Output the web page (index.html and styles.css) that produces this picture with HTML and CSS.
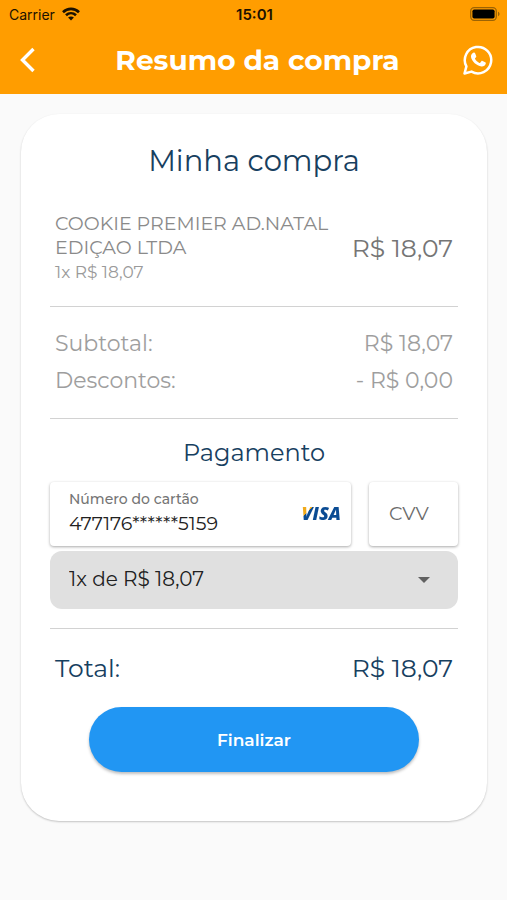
FILE: index.html
```html
<!DOCTYPE html>
<html lang="pt-BR">
<head>
    <meta charset="UTF-8">
    <meta name="viewport" content="width=device-width, initial-scale=1.0">
    <title>Resumo da compra</title>
    <link rel="stylesheet" href="styles.css">
</head>
<body>
    <header class="header">
        <div class="status-bar">
            <div class="carrier">
                <span>Carrier</span>
                <svg width="18" height="14" viewBox="0 0 18 14" fill="none" stroke="#1c1200" stroke-width="2.6">
                    <path d="M1 5.2C5.500 .8 12.500 .8 17 5.200"/>
                    <path d="M4 8.300C6.900 5.500 11.100 5.500 14 8.300"/>
                    <path d="M9 13.500L6.100 10.600C7.700 9.100 10.300 9.100 11.900 10.600Z" fill="#1c1200" stroke="none"/>
                </svg>
            </div>
            <span class="time">15:01</span>
            <svg class="battery" width="30" height="14" viewBox="0 0 30 14">
                <rect x=".7" y=".7" width="25.600" height="12.600" rx="3.500" fill="none" stroke="#9c6304" stroke-width="1.300"/>
                <rect x="2.400" y="2.400" width="22.200" height="9.200" rx="1.800" fill="#000"/>
                <path d="M28 4.800C30 5.500 30 8.500 28 9.200Z" fill="#9c6304"/>
            </svg>
        </div>
        <nav class="navbar">
            <a href="#" class="nav-link" aria-label="Voltar">
                <svg width="32" height="32" viewBox="0 0 32 32" fill="none" stroke="#fff" stroke-width="3.400">
                    <path d="M22.500 5L11.500 16L22.500 27"/>
                </svg>
            </a>
            <h1>Resumo da compra</h1>
            <a href="#" class="nav-link" aria-label="WhatsApp">
                <svg width="32" height="32" viewBox="0 0 32 32">
                    <path d="M2.500 29.500L4.400 22.400A13.200 13.200 0 1 1 9.500 27.600Z" fill="none" stroke="#fff" stroke-width="2.500" stroke-linejoin="round"/>
                    <path d="M11.300 8.800c.6-.5 1.400-.4 1.700.3l1.200 2.800c.2.500.1.900-.2 1.300l-.9 1.100c-.2.300-.2.500 0 .8 1 1.700 2.400 3 4.200 3.800.4.200.6.100.9-.2l1.200-1.500c.3-.4.700-.4 1.100-.2l2.700 1.300c.6.300.7.600.6 1.200-.4 2-2.300 3.200-4.300 3-5-.7-9.600-5-10.500-9.500-.3-1.700.8-3.300 2.300-4.200z" fill="#fff"/>
                </svg>
            </a>
        </nav>
    </header>

    <main class="card">
        <h2>Minha compra</h2>

        <div class="item">
            <div>
                <p class="item-name">COOKIE PREMIER AD.NATAL EDIÇAO LTDA</p>
                <p class="item-qty">1x R$ 18,07</p>
            </div>
            <span class="item-price">R$ 18,07</span>
        </div>

        <hr>

        <div class="values">
            <div class="row"><span>Subtotal:</span><span>R$ 18,07</span></div>
            <div class="row"><span>Descontos:</span><span>- R$ 0,00</span></div>
        </div>

        <hr>

        <form>
            <h3>Pagamento</h3>
            <div class="fields">
                <div class="field card-field">
                    <div class="card-number">
                        <label for="numero">Número do cartão</label>
                        <input type="text" id="numero" name="numero" value="477176******5159" readonly>
                    </div>
                    <span class="visa">VISA</span>
                </div>
                <input type="text" class="field cvv" name="cvv" placeholder="CVV" aria-label="CVV" maxlength="4">
            </div>
            <div class="select-box">
                <select name="parcelas" aria-label="Parcelas">
                    <option>1x de R$ 18,07</option>
                </select>
                <svg width="12" height="6" viewBox="0 0 12 6"><path d="M0 0H12L6 6Z" fill="#616161"/></svg>
            </div>

            <hr>

            <div class="row total"><span>Total:</span><span>R$ 18,07</span></div>
            <button type="submit" class="btn">Finalizar</button>
        </form>
    </main>
</body>
</html>
```
FILE: styles.css
```css
* { box-sizing: border-box; }
body { margin: 0; background: #fafafa; color: #212121; font-family: Montserrat, Inter, sans-serif; }
h1, h2, h3, p { margin: 0; font-weight: 400; }
svg { display: block; }
input, select, button { font-family: inherit; }

.header { background: #ff9d00; padding-bottom: 2px; }
.status-bar { display: grid; grid-template-columns: 1fr auto 1fr; align-items: center; height: 28px; padding: 0 7px 0 9px; font-family: Inter, sans-serif; font-size: 14px; color: #1c1200; }
.carrier { display: flex; align-items: center; gap: 7px; }
.time { font-size: 15px; font-weight: 600; }
.battery { justify-self: end; }
.navbar { display: flex; align-items: center; height: 64px; padding: 0 13px 0 11px; }
.navbar h1 { flex: 1; padding-left: 10px; color: #fff; font-size: 28px; font-weight: 700; line-height: 36px; text-align: center; }

.card { margin: 20px 20px 40px 21px; padding: 28px 29px 49px; background: #fff; border-radius: 38px; box-shadow: 0 1px 2px rgba(0,0,0,0.22); }
.card h2 { color: #17405f; font-size: 29px; line-height: 38px; text-align: center; }
.card h3 { margin-top: 18px; color: #17405f; font-size: 24px; line-height: 32px; text-align: center; }
hr { height: 1px; margin: 19px 0 0; border: none; background: #d2d2d2; }

.item { display: flex; align-items: center; justify-content: space-between; gap: 16px; margin: 32px 0 22px; padding: 0 5px; }
.item-name { color: #8a8a8a; font-size: 19px; line-height: 24px; }
.item-qty { color: #9a9a9a; font-size: 17px; line-height: 24px; }
.item-price { color: #757575; font-size: 25px; white-space: nowrap; }

.values { margin-top: 18px; color: #9e9e9e; font-size: 22px; line-height: 37px; }
.row { display: flex; justify-content: space-between; padding: 0 5px; }
.total { margin: 20px 0; color: #17405f; font-size: 25px; line-height: 38px; }

.fields { display: grid; grid-template-columns: 1fr 89px; gap: 18px; margin-top: 13px; }
.field { height: 64px; background: #fff; border: none; border-radius: 4px; box-shadow: 0 1px 3px rgba(0,0,0,0.34); }
.card-field { display: flex; align-items: center; justify-content: space-between; padding: 0 10px 2px 19px; }
.card-number { flex: 1; min-width: 0; }
.card-number label { display: block; color: #757575; font-size: 14px; font-weight: 500; line-height: 20px; }
.card-number input { display: block; width: 100%; height: 28px; padding: 0; border: none; background: none; color: #212121; font-size: 19px; }
.visa { font-family: "Open Sans", sans-serif; font-size: 18px; font-weight: 800; font-style: italic; color: transparent; background: linear-gradient(135deg, #f0aa1c 26%, #0a4b93 27%); background-clip: text; -webkit-background-clip: text; }
.cvv { width: 100%; padding: 0 20px 2px; color: #212121; font-size: 19px; }
.cvv::placeholder { color: #6b6b6b; opacity: 1; }

.select-box { display: grid; align-items: center; margin-top: 5px; }
.select-box select { grid-area: 1 / 1; height: 58px; padding: 0 48px 2px 19px; border: none; border-radius: 12px; background: #e0e0e0; color: #212121; font-size: 20px; appearance: none; }
.select-box svg { grid-area: 1 / 1; justify-self: end; margin-right: 28px; pointer-events: none; }

.btn { display: block; width: 81%; height: 65px; margin: 0 auto; border: none; border-radius: 33px; background: #2196f3; color: #fff; font-size: 17px; font-weight: 600; box-shadow: 0 2px 3px rgba(0,0,0,0.25); cursor: pointer; }
```
